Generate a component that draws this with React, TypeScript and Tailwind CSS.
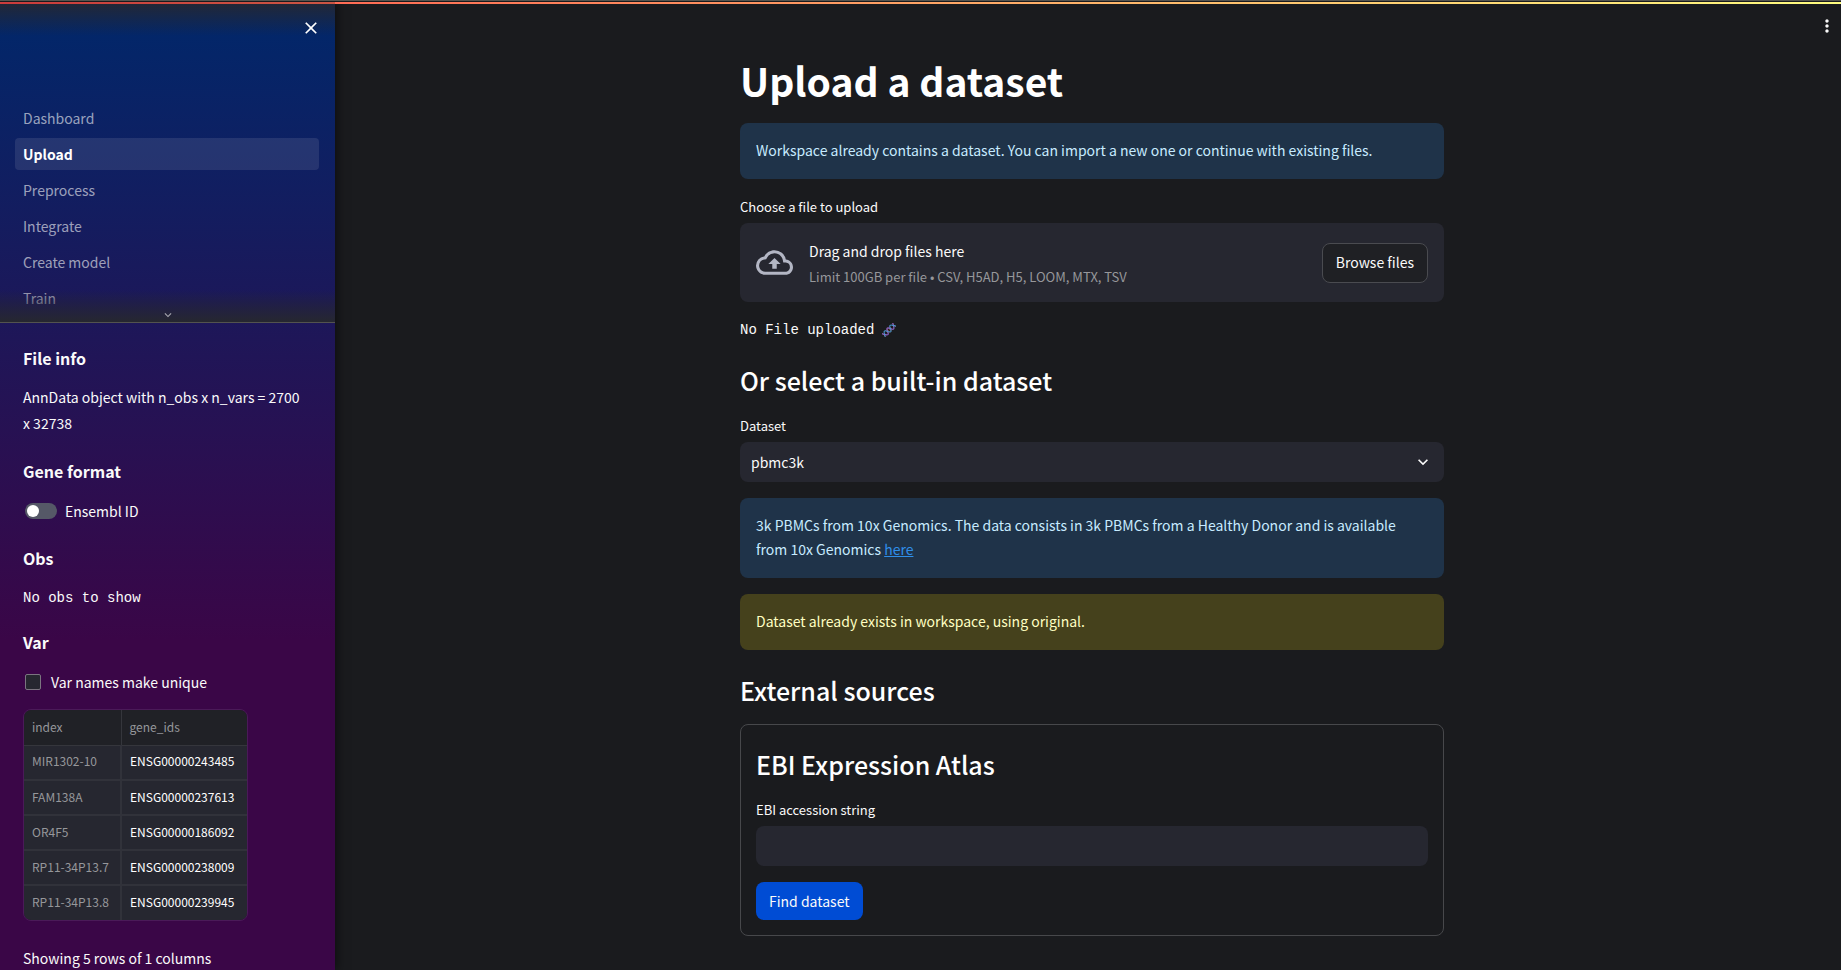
import { useState, type ReactNode } from "react";
import { MdClose, MdExpandMore, MdMoreVert, MdOutlineCloudUpload } from "react-icons/md";

const pages = ["Dashboard", "Upload", "Preprocess", "Integrate", "Create model", "Train"];

const genes = [
  ["MIR1302-10", "ENSG00000243485"],
  ["FAM138A", "ENSG00000237613"],
  ["OR4F5", "ENSG00000186092"],
  ["RP11-34P13.7", "ENSG00000238009"],
  ["RP11-34P13.8", "ENSG00000239945"],
];

function DnaIcon() {
  return (
    <svg viewBox="0 0 28 28" className="size-[14px]" role="img" aria-label="DNA" fill="none" strokeLinecap="round">
      <g transform="rotate(-45 14 14)">
        <path d="M0 10v8M9 11v6M12 10v8M16 10v8M19 11v6M28 10v8" stroke="#a5705c" strokeWidth="1.5" />
        <path d="M-3 9c4 0 5 10 9 10s4-10 8-10 4 10 8 10 5-10 9-10" stroke="#8a5fc0" strokeWidth="2.5" />
        <path d="M-3 19c4 0 5-10 9-10s4 10 8 10 4-10 8-10 5 10 9 10" stroke="#4a9bd8" strokeWidth="2" />
      </g>
    </svg>
  );
}

function SectionTitle({ children }: { children: ReactNode }) {
  return <h2 className="pb-[2px] text-[25px] leading-8 font-medium text-white">{children}</h2>;
}

function SidebarTitle({ children }: { children: ReactNode }) {
  return <h3 className="text-[16px] leading-6 font-semibold">{children}</h3>;
}

function Alert({ tone, children }: { tone: "info" | "warning"; children: ReactNode }) {
  const colors = tone === "info" ? "bg-[#1f3349] text-[#c7ebff]" : "bg-[#45411c] text-[#ffffc2]";
  return <div role="status" className={"rounded-lg px-4 pt-[15px] pb-[17px] text-[14px] leading-6 " + colors}>{children}</div>;
}

function Sidebar() {
  return (
    <aside className="relative z-10 flex h-screen w-[335px] shrink-0 flex-col overflow-hidden bg-linear-to-b/srgb from-[#00286b] to-[#3a0647] to-66% text-[14px] text-[#fafafa] shadow-[2px_0_10px_#00000080]">
      <div className="relative flex h-[323px] shrink-0 flex-col border-b border-[#53534f] pr-4 pl-[15px] pt-[102px]">
        <div className="absolute inset-x-0 top-0 h-9 bg-linear-to-b/srgb from-[#262730] to-[#262730]/0" />
        <button type="button" aria-label="Close sidebar" className="absolute top-[18px] right-[14px] text-[20px] text-white">
          <MdClose />
        </button>
        <nav aria-label="Pages">
          <ul className="flex flex-col gap-1">
            {pages.map((page) => (
              <li key={page}>
                <a
                  href={"#" + page}
                  className={
                    page === "Upload"
                      ? "block h-8 rounded-sm bg-[#acb1c3]/15 px-2 leading-8 font-bold text-white"
                      : "block h-8 rounded-sm px-2 leading-8 text-[#fafafa]/60"
                  }
                >
                  {page}
                </a>
              </li>
            ))}
          </ul>
        </nav>
        <div className="absolute inset-x-0 bottom-0 flex h-8 items-end justify-center bg-linear-to-t/srgb from-[#262730] to-[#262730]/0">
          <button type="button" aria-label="Show more pages" className="text-[14px] text-[#fafafa]/60">
            <MdExpandMore />
          </button>
        </div>
      </div>
      <div className="flex flex-col px-[23px] pt-[23px]">
        <SidebarTitle>File info</SidebarTitle>
        <p className="mt-[14px] pr-2 leading-[26px]">AnnData object with n_obs x n_vars = 2700 x 32738</p>
        <div className="mt-[23px]"><SidebarTitle>Gene format</SidebarTitle></div>
        <label className="mt-4 flex h-6 items-center gap-2 pl-[2px]">
          <input
            type="checkbox"
            role="switch"
            className="h-4 w-8 appearance-none rounded-full bg-[#555867] p-[2px] before:block before:size-3 before:rounded-full before:bg-white checked:before:ml-4"
          />
          Ensembl ID
        </label>
        <div className="mt-[23px]"><SidebarTitle>Obs</SidebarTitle></div>
        <p className="mt-4 font-['Liberation_Mono',monospace] leading-6">No obs to show</p>
        <div className="mt-5"><SidebarTitle>Var</SidebarTitle></div>
        <label className="mt-4 flex h-6 items-center gap-[10px] pl-[2px]">
          <input type="checkbox" className="size-4 appearance-none rounded-xs border border-[#7b7580] bg-[#262730] checked:bg-[#004cd4]" />
          Var names make unique
        </label>
        <div className="mt-[15px] self-start overflow-hidden rounded-lg border border-[#4a1a58]">
          <table className="border-collapse text-left text-[12px]">
            <thead>
              <tr className="h-[35px] bg-[#202126] text-[#96979b]">
                <th className="w-[97px] border-r border-b border-[#35363c] px-2 font-normal">index</th>
                <th className="w-[126px] border-b border-[#35363c] px-2 font-normal">gene_ids</th>
              </tr>
            </thead>
            <tbody>
              {genes.map(([index, gene]) => (
                <tr key={index} className="h-[35px] border-b-2 border-[#31323a] bg-[#262730] last:border-b-0">
                  <td className="border-r-2 border-[#31323a] px-2 pb-[2px] text-[#96979b]">{index}</td>
                  <td className="px-2 pb-[2px] text-white">{gene}</td>
                </tr>
              ))}
            </tbody>
          </table>
        </div>
        <p className="mt-[25px] leading-6">Showing 5 rows of 1 columns</p>
      </div>
    </aside>
  );
}

export default function App() {
  const [accession, setAccession] = useState("");
  return (
    <div className="relative flex h-screen overflow-hidden bg-[#1a1b1e] font-['Noto_Sans_CJK_JP',sans-serif] text-[14px] text-[#fafafa]">
      <div className="absolute inset-x-0 top-0 z-20 h-1 border-t border-[#55554f] bg-[#1a1b1e] pt-px">
        <div className="h-[2px] bg-linear-to-r/srgb from-[#ff4b4b] to-[#fffd80]">
          <div className="h-[2px] w-[335px] bg-black/20" />
        </div>
      </div>
      <Sidebar />
      <main className="flex-1 overflow-hidden pl-2">
        <button type="button" aria-label="Main menu" className="absolute top-4 right-1 text-[20px] text-[#fafafa]">
          <MdMoreVert />
        </button>
        <div className="mx-auto flex max-w-[736px] flex-col px-4 pt-[53px]">
          <h1 className="text-[39px] leading-[54px] font-bold text-white">Upload a dataset</h1>
          <div className="mt-4">
            <Alert tone="info">Workspace already contains a dataset. You can import a new one or continue with existing files.</Alert>
          </div>
          <p className="mt-4 text-[13px] leading-6">Choose a file to upload</p>
          <section className="mt-1 flex h-[79px] items-center rounded-lg bg-[#262730] px-4" aria-label="File upload">
            <MdOutlineCloudUpload className="mr-4 size-[37px] text-[#b3b6c4]" />
            <div className="flex flex-1 flex-col gap-[2px] pt-[2px]">
              <p className="leading-6">Drag and drop files here</p>
              <p className="text-[13px] leading-6 text-[#96979b]">Limit 100GB per file • CSV, H5AD, H5, LOOM, MTX, TSV</p>
            </div>
            <button type="button" className="h-10 rounded-lg border border-[#4a4b50] bg-[#1f2024] px-[13px]">Browse files</button>
          </section>
          <p className="mt-4 flex items-center gap-2 font-['Liberation_Mono',monospace] leading-6">
            No File uploaded <DnaIcon />
          </p>
          <div className="mt-[22px]"><SectionTitle>Or select a built-in dataset</SectionTitle></div>
          <label htmlFor="dataset" className="mt-4 text-[13px] leading-6">Dataset</label>
          <div className="relative mt-1">
            <select id="dataset" className="h-10 w-full appearance-none rounded-lg bg-[#262730] px-[11px] text-[14px]">
              <option>pbmc3k</option>
            </select>
            <MdExpandMore className="pointer-events-none absolute top-[10px] right-[11px] size-5" />
          </div>
          <div className="mt-4 flex flex-col gap-4">
            <Alert tone="info">
              3k PBMCs from 10x Genomics. The data consists in 3k PBMCs from a Healthy Donor and is available from 10x Genomics{" "}
              <a href="#here" className="text-[#2f8ee8] underline">here</a>
            </Alert>
            <Alert tone="warning">Dataset already exists in workspace, using original.</Alert>
          </div>
          <div className="mt-6"><SectionTitle>External sources</SectionTitle></div>
          <section className="mt-4 flex flex-col rounded-lg border border-[#47484b] px-[15px] pt-[23px] pb-[15px]">
            <SectionTitle>EBI Expression Atlas</SectionTitle>
            <label htmlFor="accession" className="mt-4 text-[13px] leading-6">EBI accession string</label>
            <input
              id="accession"
              type="text"
              value={accession}
              onChange={(event) => setAccession(event.target.value)}
              className="mt-1 h-10 rounded-lg bg-[#262730] px-3"
            />
            <button type="button" className="mt-4 h-[38px] self-start rounded-lg bg-[#004cd4] px-[13px]">Find dataset</button>
          </section>
        </div>
      </main>
    </div>
  );
}
